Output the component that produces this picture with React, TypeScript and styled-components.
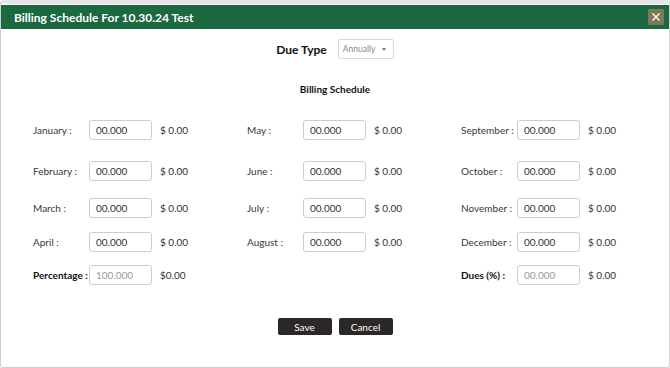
import React from 'react'
import styled, { createGlobalStyle } from 'styled-components'

const GlobalStyle = createGlobalStyle`
  html, body {
    margin: 0;
    padding: 0;
    background: #ffffff;
    font-family: Lato, 'Noto Sans', sans-serif;
  }
`

const Modal = styled.div`
  box-sizing: border-box;
  width: 670px;
  height: 368px;
  border: 1px solid #cfcfcf;
  border-top: 4px solid #e6e6e6;
  border-radius: 3px;
  display: flex;
  flex-direction: column;
  background: #fff;
`

const Header = styled.div`
  height: 24px;
  margin-top: 1px;
  background: #1b6841;
  display: flex;
  align-items: center;
  justify-content: space-between;
  padding: 0 5px 0 13px;
`

const Title = styled.h1`
  margin: 0;
  color: #fff;
  font-size: 12px;
  font-weight: 700;
`

const CloseButton = styled.button`
  width: 16px;
  height: 16px;
  padding: 0;
  border: none;
  border-radius: 1px;
  background: #7e7a58;
  display: flex;
  align-items: center;
  justify-content: center;
  cursor: pointer;
`

const Body = styled.div`
  flex: 1;
  display: flex;
  flex-direction: column;
  align-items: center;
  padding-top: 10px;
`

const DueTypeRow = styled.div`
  display: flex;
  align-items: center;
  gap: 11px;
`

const DueTypeLabel = styled.span`
  font-size: 12px;
  font-weight: 700;
  color: #111;
`

const Select = styled.div`
  box-sizing: border-box;
  width: 56px;
  height: 20px;
  border: 1px solid #d8d8d8;
  border-radius: 2px;
  display: flex;
  align-items: center;
  justify-content: space-between;
  padding: 0 7px 0 4px;
  font-size: 8.5px;
  color: #8a8a8a;
`

const Caret = styled.span`
  width: 0;
  height: 0;
  border-left: 2.5px solid transparent;
  border-right: 2.5px solid transparent;
  border-top: 3px solid #777;
`

const SectionTitle = styled.h2`
  margin: 24px 0 0;
  font-size: 10px;
  font-weight: 700;
  color: #111;
`

const Grid = styled.div`
  align-self: stretch;
  margin: 25px 0 0 32px;
  display: grid;
  grid-template-columns: repeat(3, 214px);
  grid-template-rows: 41px 37px 34px 33px 20px;
`

const Field = styled.div`
  display: flex;
  align-items: flex-start;
  height: 20px;
`

const Label = styled.span<{ $bold?: boolean }>`
  width: 56px;
  line-height: 20px;
  font-size: 10px;
  font-weight: ${p => (p.$bold ? 700 : 400)};
  color: ${p => (p.$bold ? '#111' : '#383838')};
  white-space: nowrap;
`

const Input = styled.div<{ $muted?: boolean }>`
  box-sizing: border-box;
  width: 63px;
  height: 20px;
  border: 1px solid #cdcdcd;
  border-radius: 3px;
  padding-left: 6px;
  line-height: 18px;
  font-size: 10px;
  color: ${p => (p.$muted ? '#9a9a9a' : '#333')};
`

const Amount = styled.span`
  margin-left: 8px;
  line-height: 20px;
  font-size: 10px;
  color: #333;
`

const Actions = styled.div`
  display: flex;
  gap: 7px;
  margin-top: 33px;
`

const Button = styled.button`
  width: 54px;
  height: 17px;
  padding: 0;
  border: none;
  border-radius: 2px;
  background: #2b2827;
  color: #fff;
  font-family: inherit;
  font-size: 10px;
  cursor: pointer;
`

type Cell = { label: string; value: string; amount: string; bold?: boolean; muted?: boolean } | null

const m = (label: string): Cell => ({ label, value: '00.000', amount: '$ 0.00' })

const cells: Cell[] = [
  m('January :'), m('May :'), m('September :'),
  m('February :'), m('June :'), m('October :'),
  m('March :'), m('July :'), m('November :'),
  m('April :'), m('August :'), m('December :'),
  { label: 'Percentage :', value: '100.000', amount: '$0.00', bold: true, muted: true },
  null,
  { label: 'Dues (%) :', value: '00.000', amount: '$ 0.00', bold: true, muted: true },
]

const App: React.FC = () => (
  <>
    <GlobalStyle />
    <Modal>
      <Header>
        <Title>Billing Schedule For 10.30.24 Test</Title>
        <CloseButton aria-label="Close">
          <svg width="10" height="10" viewBox="0 0 10 10">
            <path d="M1.5 1.5 L8.5 8.5 M8.5 1.5 L1.5 8.5" stroke="#fff" strokeWidth="1.4" />
          </svg>
        </CloseButton>
      </Header>
      <Body>
        <DueTypeRow>
          <DueTypeLabel>Due Type</DueTypeLabel>
          <Select>
            Annually
            <Caret />
          </Select>
        </DueTypeRow>
        <SectionTitle>Billing Schedule</SectionTitle>
        <Grid>
          {cells.map((c, i) =>
            c ? (
              <Field key={i}>
                <Label $bold={c.bold}>{c.label}</Label>
                <Input $muted={c.muted}>{c.value}</Input>
                <Amount>{c.amount}</Amount>
              </Field>
            ) : (
              <div key={i} />
            )
          )}
        </Grid>
        <Actions>
          <Button>Save</Button>
          <Button>Cancel</Button>
        </Actions>
      </Body>
    </Modal>
  </>
)

export default App
